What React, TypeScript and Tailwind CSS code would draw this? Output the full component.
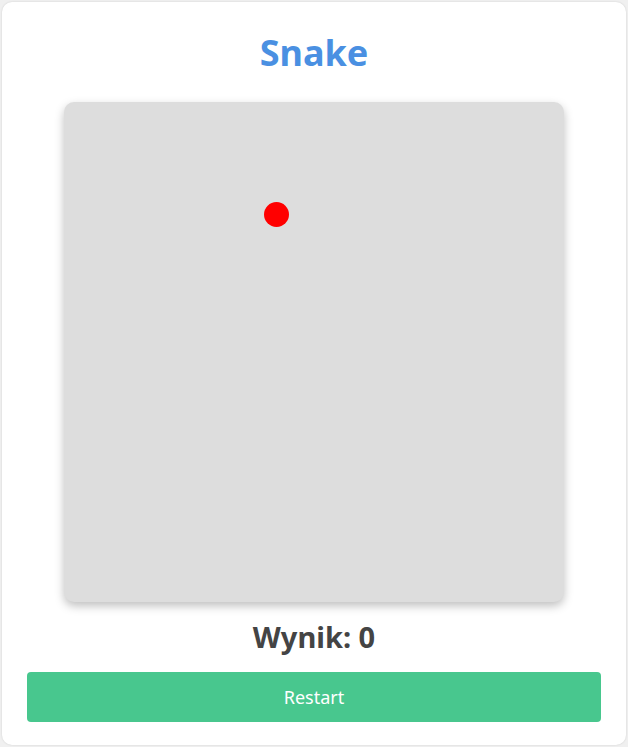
import React from 'react';

const CELL = 25;

const App = () => {
  const food = { x: 8, y: 4 };

  return (
    <div className="min-h-screen bg-[#f0f0f0] p-[2px]" style={{ fontFamily: '"Noto Sans", "Open Sans", sans-serif' }}>
      <div className="w-[624px] h-[743px] bg-white rounded-[10px] shadow-[0_0_2px_rgba(0,0,0,0.15)] flex flex-col items-center pt-[29px] px-[25px]">
        <h1 className="text-[36px] leading-[44px] font-bold text-[#4a90e2]">Snake</h1>

        <div className="relative mt-[27px] w-[500px] h-[500px] bg-[#dddddd] rounded-[10px] shadow-[0_4px_10px_rgba(0,0,0,0.25)]">
          <div
            className="absolute rounded-full bg-[#ff0000]"
            style={{ left: food.x * CELL, top: food.y * CELL, width: CELL, height: CELL }}
          />
        </div>

        <p className="mt-[17px] text-[29px] leading-[35px] font-bold text-[#444444]">Wynik: 0</p>

        <button className="mt-[18px] w-full h-[50px] rounded-[4px] bg-[#48c78e] text-white text-[18px]">
          Restart
        </button>
      </div>
    </div>
  );
};

export default App;
